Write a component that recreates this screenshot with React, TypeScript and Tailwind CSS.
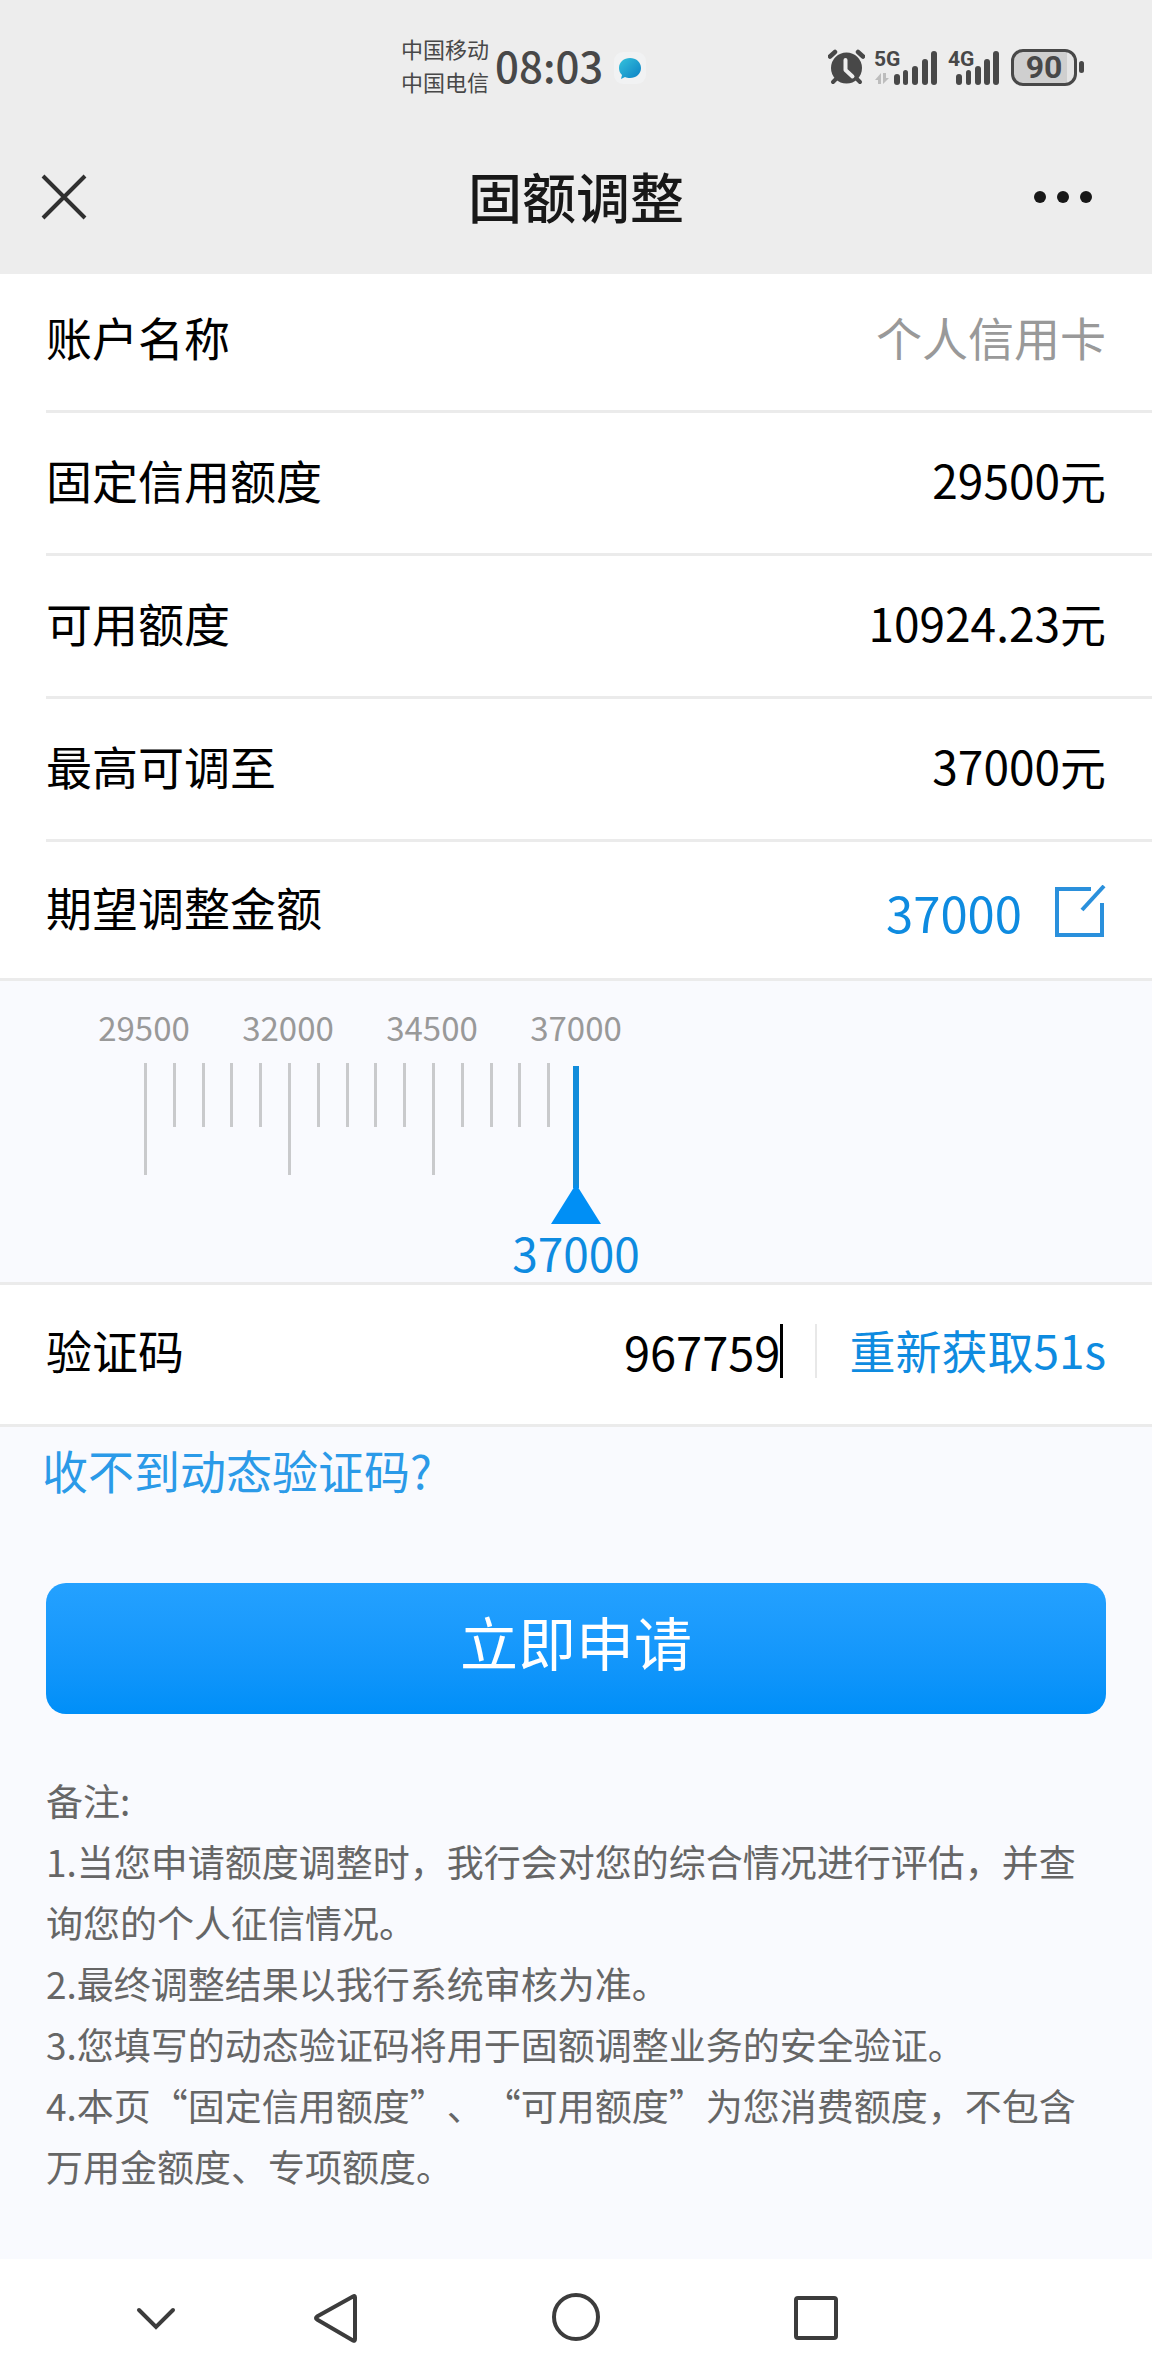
import { useState } from "react";

const infoRows = [
  { label: "账户名称", value: "个人信用卡", muted: true },
  { label: "固定信用额度", value: "29500元" },
  { label: "可用额度", value: "10924.23元" },
  { label: "最高可调至", value: "37000元" },
];

const marks = [29500, 32000, 34500, 37000];

const notes = [
  "1.当您申请额度调整时，我行会对您的综合情况进行评估，并查询您的个人征信情况。",
  "2.最终调整结果以我行系统审核为准。",
  "3.您填写的动态验证码将用于固额调整业务的安全验证。",
  "4.本页“固定信用额度”、“可用额度”为您消费额度，不包含万用金额度、专项额度。",
];

function Signal({ label, arrows }: { label: string; arrows?: boolean }) {
  return (
    <svg
      className="overflow-visible"
      width="64"
      height="38"
      viewBox="0 -2 64 38"
      fill="#484848"
      aria-label={label}
    >
      <text x="-1" y="16" fontSize="21" fontWeight="700" fontFamily="Roboto, sans-serif">
        {label}
      </text>
      {arrows && <path d="M0 30l6-7v11H3v-4zM8 23v11l6-6h-3v-5z" fill="#bdbdbd" />}
      <rect x={arrows ? 19 : 7} y="24" width="6" height="11" rx="3" />
      <rect x={arrows ? 28 : 17} y="20" width="5" height="15" rx="2.5" />
      <rect x={arrows ? 37 : 26} y="16" width="6" height="19" rx="3" />
      <rect x={arrows ? 47 : 35} y="9" width="6" height="26" rx="3" />
      <rect x={arrows ? 56 : 44} y="1" width="6" height="34" rx="3" />
    </svg>
  );
}

function StatusBar() {
  return (
    <div className="grid grid-cols-[1fr_auto] items-center pt-8 pr-[68px] text-[#484848]">
      <div className="flex items-center pl-[401px]">
        <div className="text-[22px] leading-[33px] whitespace-nowrap">
          <p>中国移动</p>
          <p>中国电信</p>
        </div>
        <span className="ml-1.5 text-[42px] leading-[66px] font-medium">08:03</span>
        <svg className="ml-2.5 shrink-0" width="34" height="40" viewBox="0 -6 34 40">
          <defs>
            <linearGradient id="bubble" x1="0" y1="0" x2="1" y2="1">
              <stop offset="0" stopColor="#35c3dc" />
              <stop offset="1" stopColor="#0a7fc4" />
            </linearGradient>
          </defs>
          <rect x="1" y="1" width="32" height="32" rx="9" fill="#f1f2f3" />
          <path
            d="M17 7c6 0 11 4 11 10s-5 10-11 10c-2 0-3.500-.3-5-1l-4 2 1-4c-2-2-3-4-3-7 0-6 5-10 11-10z"
            fill="url(#bubble)"
          />
        </svg>
      </div>
      <div className="flex items-center pt-1">
        <svg width="37" height="36" viewBox="0 0 37 36" fill="none" stroke="#484848" strokeLinecap="round">
          <circle cx="18.500" cy="19" r="15.500" fill="#484848" stroke="none" />
          <path d="M2 7.500l5-4.500M35 7.500l-5-4.500" strokeWidth="4.500" />
          <path d="M8 30l-3 3M29 30l3 3" strokeWidth="4" />
          <path d="M17.500 11v10l7 6.500" stroke="#ededed" strokeWidth="4" strokeLinejoin="round" />
        </svg>
        <div className="ml-2.5 flex gap-2.5">
          <Signal label="5G" arrows />
          <Signal label="4G" />
        </div>
        <div className="-ml-0.5 flex items-center gap-0.5">
          <span className="h-[37px] w-[66px] rounded-xl border-[3px] border-[#484848] bg-[linear-gradient(90deg,#cfcfcf_88%,#e4e4e4_88%)] text-center font-[Roboto,sans-serif] text-[32px] leading-[31px] font-bold">
            90
          </span>
          <span className="h-3 w-[5px] rounded-full bg-[#484848]" />
        </div>
      </div>
    </div>
  );
}

function TitleBar() {
  return (
    <div className="grid grid-cols-[1fr_auto_1fr] items-center px-10 pt-[58px] pb-[38px] text-[#181818]">
      <button type="button" aria-label="关闭" className="justify-self-start pt-0.5">
        <svg width="48" height="48" viewBox="0 0 48 48" stroke="#303030" strokeWidth="4">
          <path d="M3 3l42 42M45 3L3 45" />
        </svg>
      </button>
      <h1 className="text-[54px] leading-[80px] font-medium">固额调整</h1>
      <button type="button" aria-label="更多" className="justify-self-end pt-0.5 pr-5">
        <svg width="60" height="16" viewBox="0 0 60 16" fill="#181818">
          <circle cx="8" cy="8" r="6" />
          <circle cx="31" cy="8" r="6" />
          <circle cx="54" cy="8" r="6" />
        </svg>
      </button>
    </div>
  );
}

function Ruler({ amount, onChange }: { amount: number; onChange: (v: number) => void }) {
  return (
    <section className="relative border-y-[3px] border-[#ebebeb] pt-[22px] pb-0.5">
      <div className="flex px-[6.25%] text-[33px] leading-[48px] text-[#999]">
        {marks.map((m) => (
          <span key={m} className="w-1/7 text-center">
            {m}
          </span>
        ))}
      </div>
      <div className="mt-3 grid">
        <div className="col-start-1 row-start-1 flex px-[12.5%]">
          {marks.slice(0, -1).map((m) => (
            <div key={m} className="flex w-1/6">
              {[0, 1, 2, 3, 4].map((i) => (
                <span key={i} className="w-1/5">
                  <span className={`block w-[3px] bg-[#c9cacc] ${i === 0 ? "h-28" : "h-16"}`} />
                </span>
              ))}
            </div>
          ))}
        </div>
        <div className="col-start-1 row-start-1 flex flex-col items-center pt-[3px] text-[#0e8be0]">
          <span className="h-[122px] w-1.5 bg-[#128cdb]" />
          <svg className="-mt-1" width="50" height="40" viewBox="0 0 50 40">
            <path d="M25 0l25 40H0z" fill="#008ff5" />
          </svg>
          <output className="text-[46px] leading-[56px]">{amount}</output>
        </div>
      </div>
      <input
        type="range"
        aria-label="期望调整金额"
        min={29500}
        max={37000}
        step={500}
        value={amount}
        onChange={(e) => onChange(Number(e.target.value))}
        className="absolute top-20 left-[12.5%] h-28 w-[37.5%] opacity-0"
      />
    </section>
  );
}

function SystemNav() {
  return (
    <nav className="flex h-[117px] items-center bg-white pl-[132px]">
      <button type="button" aria-label="收起">
        <svg width="48" height="52" viewBox="0 0 48 52" fill="none" stroke="#3c3c3c" strokeWidth="4" strokeLinecap="round">
          <path d="M7 18l17 17 17-17" />
        </svg>
      </button>
      <button type="button" aria-label="返回" className="ml-[130px]">
        <svg width="52" height="52" viewBox="0 0 52 52" fill="none" stroke="#3c3c3c" strokeWidth="4" strokeLinejoin="round">
          <path d="M45 5.500Q45 3 43 4.500L7 24.500Q5 26 7 27.500L43 48.500Q45 49.500 45 47z" />
        </svg>
      </button>
      <button type="button" aria-label="主页" className="ml-[188px]">
        <svg width="52" height="52" viewBox="0 0 52 52" fill="none" stroke="#3c3c3c" strokeWidth="4">
          <circle cx="26" cy="25" r="22" />
        </svg>
      </button>
      <button type="button" aria-label="最近任务" className="ml-[188px]">
        <svg width="52" height="52" viewBox="0 0 52 52" fill="none" stroke="#3c3c3c" strokeWidth="4">
          <rect x="6" y="6" width="40" height="40" rx="2" />
        </svg>
      </button>
    </nav>
  );
}

export default function App() {
  const [amount, setAmount] = useState(37000);
  const [code, setCode] = useState("967759");

  return (
    <div
      lang="zh-CN"
      className="flex min-h-screen flex-col bg-[#f9fafe] font-['Noto_Sans_CJK_SC',sans-serif] text-[46px] leading-[68px] text-black"
    >
      <header className="bg-[#ededed]">
        <StatusBar />
        <TitleBar />
      </header>

      <main className="flex-1">
        <dl className="bg-white pl-[46px]">
          {infoRows.map((row) => (
            <div
              key={row.label}
              className="flex items-center justify-between border-b-[3px] border-[#ebebeb] pt-8 pr-[46px] pb-10 first:pt-7"
            >
              <dt>{row.label}</dt>
              <dd className={row.muted ? "text-[#999]" : ""}>{row.value}</dd>
            </div>
          ))}
          <div className="flex items-center justify-between pt-6 pr-[46px] pb-8">
            <dt>期望调整金额</dt>
            <dd className="flex items-center gap-8 text-[49px] text-[#0e8be0]">
              <span className="pt-3">{amount}</span>
              <button type="button" aria-label="修改金额" className="pt-2.5">
                <svg width="52" height="52" viewBox="0 0 52 52" fill="none" stroke="#2a90dc" strokeWidth="4">
                  <path d="M37 4H3v46h45V18" />
                  <path d="M28 25L50 1" />
                </svg>
              </button>
            </dd>
          </div>
        </dl>

        <Ruler amount={amount} onChange={setAmount} />

        <div className="flex items-center border-b-[3px] border-[#ebebeb] bg-white px-[46px] pt-7 pb-[39px]">
          <label htmlFor="code">验证码</label>
          <div className="flex min-w-0 flex-1 items-center pt-1">
            <input
              id="code"
              value={code}
              onChange={(e) => setCode(e.target.value)}
              inputMode="numeric"
              className="h-[68px] min-w-0 flex-1 text-right text-[47px] outline-none"
            />
            <span className="h-[54px] w-[3px] bg-black" />
            <span className="mx-8 h-[54px] w-0.5 bg-[#e8e8e8]" />
          </div>
          <button type="button" className="text-[#0e8be0]">
            重新获取51s
          </button>
        </div>

        <a href="#help" className="ml-[42px] inline-block pt-2 text-[#2b9ae8]">
          收不到动态验证码?
        </a>

        <div className="px-[46px] pt-20">
          <button
            type="button"
            className="w-full rounded-[20px] bg-linear-to-b from-[#24a1ff] to-[#008ff8] pt-4 pb-[31px] text-[58px] leading-[84px] text-white"
          >
            立即申请
          </button>
          <div className="pt-14 pb-12 text-[37px] leading-[61px] text-[#666] [text-spacing-trim:space-all]">
            <p>备注:</p>
            {notes.map((note) => (
              <p key={note}>{note}</p>
            ))}
          </div>
        </div>
      </main>

      <SystemNav />
    </div>
  );
}
